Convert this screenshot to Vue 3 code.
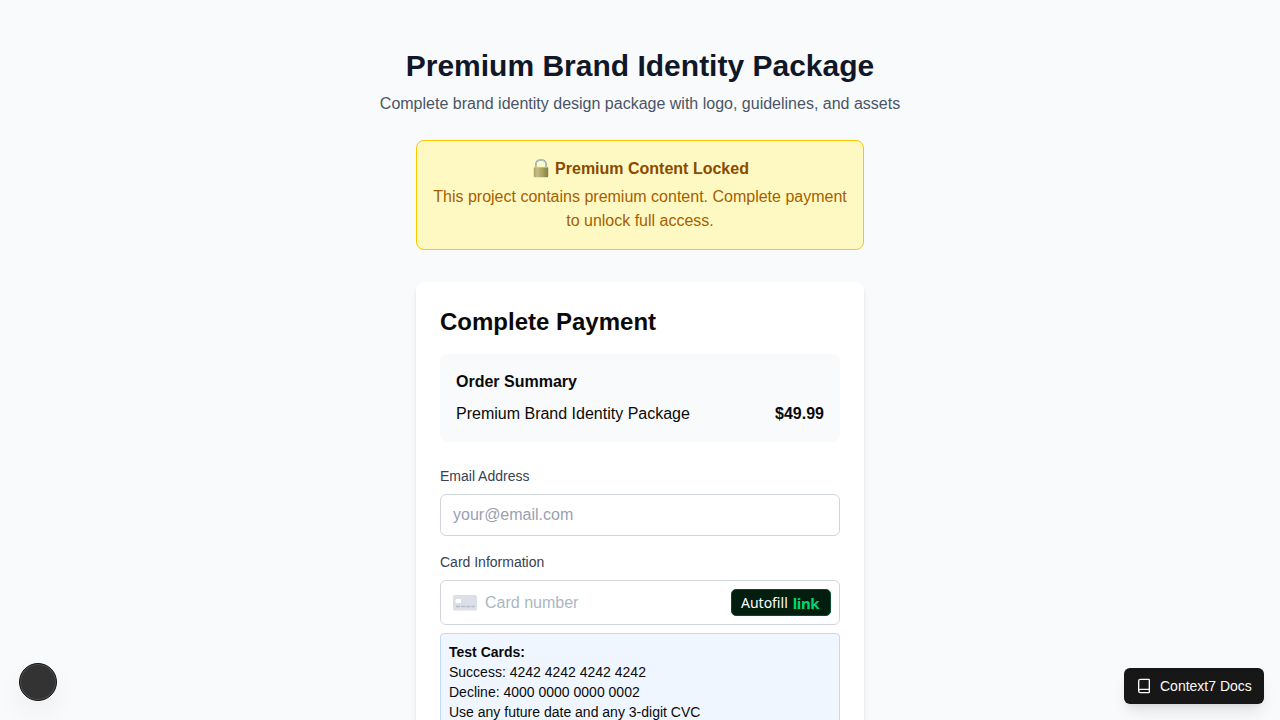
<script setup>
const testCards = [
  'Success: 4242 4242 4242 4242',
  'Decline: 4000 0000 0000 0002',
  'Use any future date and any 3-digit CVC'
]
</script>

<template>
  <main class="page">
    <header class="heading">
      <h1>Premium Brand Identity Package</h1>
      <p>Complete brand identity design package with logo, guidelines, and assets</p>
    </header>

    <section class="notice">
      <h2>
        <svg class="lock" width="16" height="20" viewBox="0 0 16 20">
          <defs>
            <linearGradient id="brass" x1="0" x2="1" y1="0" y2="0">
              <stop offset="0" stop-color="#aaa067" />
              <stop offset=".22" stop-color="#c5bd83" />
              <stop offset=".65" stop-color="#a69d5e" />
              <stop offset="1" stop-color="#817d42" />
            </linearGradient>
          </defs>
          <path d="M2.8 9V6C2.8 2.8 5 1 8 1s5.2 1.8 5.2 5V9" fill="none" stroke="#8799a4" stroke-width="1.6" />
          <path d="M2.8 9V6C2.8 2.8 5 1 8 1s5.2 1.8 5.2 5V9" fill="none" stroke="#c3d2dc" stroke-width=".8" />
          <rect x=".8" y="8" width="14.4" height="10.2" rx="1" fill="url(#brass)" />
          <path d="M1.5 8.4h13" stroke="#d2ca91" stroke-width=".8" />
        </svg>
        <span>Premium Content Locked</span>
      </h2>
      <p>This project contains premium content. Complete payment to unlock full access.</p>
    </section>

    <section class="card">
      <h2>Complete Payment</h2>
      <div class="summary">
        <h3>Order Summary</h3>
        <div class="row"><span>Premium Brand Identity Package</span><b>$49.99</b></div>
      </div>
      <label for="email">Email Address</label>
      <input id="email" class="email" type="email" placeholder="your@email.com" />
      <label>Card Information</label>
      <div class="card-field">
        <svg width="24" height="16" viewBox="0 0 24 16">
          <rect width="24" height="15.5" rx="1.5" fill="#dcdfe7" />
          <rect x="2.5" y="4" width="5.5" height="4" rx="1" fill="#fff" />
          <path d="M3 11.5h4m1.2 0h4m1.2 0h4m1.2 0h3" stroke="#b3bac8" stroke-width="1.4" />
        </svg>
        <span class="number">Card number</span>
        <button class="autofill"><span>Autofill</span><b>link</b></button>
      </div>
      <div class="tests">
        <b>Test Cards:</b>
        <p v-for="line in testCards" :key="line">{{ line }}</p>
      </div>
    </section>

    <div class="bubble"></div>
    <button class="docs">
      <svg width="16" height="16" viewBox="0 0 24 24" fill="none" stroke="currentColor" stroke-width="2" stroke-linecap="round" stroke-linejoin="round">
        <path d="M4 19.5v-15A2.5 2.5 0 0 1 6.5 2H19a1 1 0 0 1 1 1v18a1 1 0 0 1-1 1H6.5a1 1 0 0 1 0-5H20" />
      </svg>
      <span>Context7 Docs</span>
    </button>
  </main>
</template>

<style>
body { margin: 0; overflow: hidden; }
</style>

<style scoped>
* { box-sizing: border-box; }
h1, h2, h3, p { margin: 0; }
.page {
  height: 720px;
  overflow: hidden;
  padding-top: 48px;
  display: flex;
  flex-direction: column;
  align-items: center;
  background: #f9fafb;
  color: #0a0a0a;
  font: 16px/24px "Liberation Sans", Arial, sans-serif;
}
.heading { text-align: center; }
.heading h1 { font-size: 30px; line-height: 36px; color: #101828; margin-bottom: 8px; }
.heading p { color: #4a5565; }
.notice {
  width: 448px;
  flex-shrink: 0;
  margin: 24px 0 32px;
  padding: 16px;
  border: 1px solid #fcc800;
  border-radius: 8px;
  background: #fef9c2;
  text-align: center;
  color: #a65f00;
}
.notice h2 {
  display: flex;
  justify-content: center;
  align-items: center;
  gap: 6px;
  height: 24px;
  margin-bottom: 4px;
  padding-left: 2px;
  font-size: 16px;
  line-height: 24px;
  color: #894b00;
}
.card {
  width: 448px;
  flex-shrink: 0;
  padding: 24px;
  border-radius: 8px;
  background: #fff;
  box-shadow: 0 4px 6px -1px rgba(0, 0, 0, .1), 0 2px 4px -2px rgba(0, 0, 0, .1);
}
.card h2 { font-size: 24px; line-height: 32px; margin-bottom: 16px; }
.summary { padding: 16px; border-radius: 8px; background: #f9fafb; margin-bottom: 24px; }
.summary h3 { font-size: 16px; margin-bottom: 8px; }
.row { display: flex; justify-content: space-between; }
label { display: block; font-size: 14px; line-height: 20px; color: #364153; margin-bottom: 8px; }
.email {
  display: block;
  width: 400px;
  height: 42px;
  margin: 0 0 16px;
  padding: 8px 12px;
  border: 1px solid #d1d5dc;
  border-radius: 6px;
  background: #fff;
  font: inherit;
}
.email::placeholder { color: #99a1af; opacity: 1; }
.card-field {
  height: 45px;
  padding: 0 8px 0 12px;
  display: flex;
  align-items: center;
  border: 1px solid #d1d5dc;
  border-radius: 6px;
}
.number { margin-left: 8px; color: #aab7c4; }
.autofill {
  margin-left: auto;
  width: 100px;
  height: 27px;
  padding: 0 0 0 9px;
  display: flex;
  align-items: center;
  gap: 5px;
  border: 1px solid #064b2d;
  border-radius: 5px;
  background: #011e0f;
  color: #fff;
  font: 14px/20px "Noto Sans", sans-serif;
}
.autofill b { color: #00d66f; font: 700 15px/20px "Noto Sans", sans-serif; letter-spacing: -.4px; }
.tests {
  margin-top: 8px;
  padding: 8px;
  border: 1px solid #bedbff;
  border-radius: 4px;
  background: #eff6ff;
  font-size: 14px;
  line-height: 20px;
}
.tests b { display: block; }
.bubble {
  position: absolute;
  left: 19px;
  top: 663px;
  width: 38px;
  height: 38px;
  border: 1px solid #141414;
  border-radius: 50%;
  background: #333;
  box-shadow: inset 0 0 0 1px #505050, 0 12px 28px rgba(0, 0, 0, .05);
}
.docs {
  position: absolute;
  right: 16px;
  bottom: 16px;
  width: 140px;
  height: 36px;
  padding: 0 12px;
  display: flex;
  align-items: center;
  gap: 8px;
  border: 0;
  border-radius: 6px;
  background: #171717;
  color: #fafafa;
  font: 14px/20px "Liberation Sans", Arial, sans-serif;
  white-space: nowrap;
  box-shadow: 0 10px 15px -3px rgba(0, 0, 0, .1), 0 4px 6px -4px rgba(0, 0, 0, .1);
}
.docs svg { flex-shrink: 0; }
</style>
